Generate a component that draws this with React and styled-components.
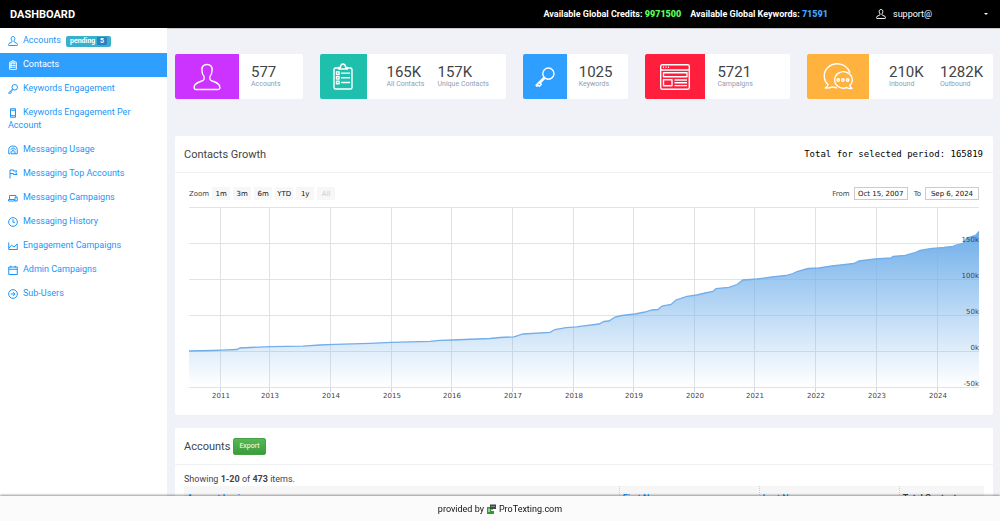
import React from 'react';
import styled, { createGlobalStyle } from 'styled-components';

const menu = [
  { label: 'Accounts', icon: 'user', pending: 5 },
  { label: 'Contacts', icon: 'note', active: true },
  { label: 'Keywords Engagement', icon: 'key' },
  { label: 'Keywords Engagement Per Account', icon: 'phone' },
  { label: 'Messaging Usage', icon: 'home' },
  { label: 'Messaging Top Accounts', icon: 'flag' },
  { label: 'Messaging Campaigns', icon: 'laptop' },
  { label: 'Messaging History', icon: 'clock' },
  { label: 'Engagement Campaigns', icon: 'graph' },
  { label: 'Admin Campaigns', icon: 'date' },
  { label: 'Sub-Users', icon: 'right' },
];

const stats = [
  { icon: 'user', color: '#cc33ff', cols: 6, w: 28, h: 28, values: [['577', 'Accounts']] },
  {
    icon: 'note',
    color: '#1fbfae',
    cols: 3,
    w: 20,
    h: 27,
    values: [['165K', 'All Contacts'], ['157K', 'Unique Contacts']],
  },
  { icon: 'key', color: '#2e9fff', cols: 5, w: 20, h: 20, values: [['1025', 'Keywords']] },
  { icon: 'browser', color: '#ff1f3d', cols: 5, w: 30, h: 26, values: [['5721', 'Campaigns']] },
  {
    icon: 'chat',
    color: '#ffb23e',
    cols: 4,
    w: 30,
    h: 27,
    values: [['210K', 'Inbound'], ['1282K', 'Outbound']],
  },
];

const ranges = ['1m', '3m', '6m', 'YTD', '1y', 'All'];

const years = [
  [32, '2011'],
  [81, '2013'],
  [142, '2014'],
  [203, '2015'],
  [263, '2016'],
  [324, '2017'],
  [385, '2018'],
  [445, '2019'],
  [506, '2020'],
  [566, '2021'],
  [627, '2022'],
  [688, '2023'],
  [749, '2024'],
];

const levels = [
  [37, '150k'],
  [73, '100k'],
  [109, '50k'],
  [145, '0k'],
  [181, '-50k'],
];

const growth =
  'M0 145 L23 144.5 33 144.2 48 143.5 51 142 61 141.5 81 140.7 114 140.2 131 139 146 138.3 181 137.3 202 136.3 241 135.3 251 134.3 263 134 301 132.5 311 131.5 325 130.8 334 128 361 126.3 366 123.5 377 121.7 388 120.8 391 120.3 410 118 415 115.5 420 115 426 111 433 109.5 446 108 456 106 463 104 469 103.5 473 100 482 98.5 487 94 498 90.3 508 89 516 87 524 85.5 527 82.7 540 81.3 548 78.5 554 74 568 73 583 71 597 69.5 604 67.5 608 65.5 619 62.5 630 62 643 60 665 57.5 670 55 686 53 702 52 704 50.5 716 49.3 725 47 731 44.5 741 42.7 755 41.5 764 40.3 767 39 774 37.5 778 32 784 30 787 29 790 25.5';

const shapes = {
  user: {
    box: '0 0 28 28',
    draw: (
      <path d="M14 1.5C10.4 1.5 8.7 3.7 8.9 7.2C9 9.9 9.8 12 11 13.4C11.5 15.1 11.4 16.4 10.3 17.2C8 18.8 2.6 19.2 1.4 23C.9 25 1 26.5 3 26.5H25C27 26.5 27.1 25 26.6 23C25.4 19.2 20 18.8 17.7 17.2C16.6 16.4 16.5 15.1 17 13.4C18.2 12 19 9.9 19.1 7.2C19.3 3.7 17.6 1.5 14 1.5Z" />
    ),
  },
  note: {
    box: '0 0 20 27',
    draw: (
      <>
        <path d="M5 5H2.5Q1 5 1 6.5V24.5Q1 26 2.5 26H17.5Q19 26 19 24.5V6.5Q19 5 17.5 5H15" />
        <path d="M5.5 6V4.5H7.3C7.6 2.3 8.5 1 10 1S12.4 2.3 12.7 4.5H14.5V6Z" />
        <path d="M3.5 8.8h2.6v2.6h-2.6zM3.5 13.5h2.6v2.6h-2.6zM3.5 18.2h2.6v2.6h-2.6zM8 10.1h9M8 14.8h9M8 19.5h9" />
      </>
    ),
  },
  key: {
    box: '0 0 20 20',
    draw: (
      <>
        <circle cx="13.4" cy="6.6" r="5.6" />
        <path d="M9 10.2L1 18.2L2 19.2L3.2 18L4.4 19.2L6.4 17.2L5.2 16L10 11.2M3.8 15.4L5 16.6" />
      </>
    ),
  },
  browser: {
    box: '0 0 30 26',
    draw: (
      <>
        <rect x=".7" y=".7" width="28.6" height="24.6" rx="1.5" />
        <path d="M.7 6H29.3M3 3.3h1M5.5 3.3h1M8 3.3h1" />
        <path d="M3.5 8.7h23.5v4h-23.5zM3.5 15.7h8.5v6h-8.5zM14.5 16h12.5M14.5 18.8h12.5M14.5 21.6h12.5" />
      </>
    ),
  },
  chat: {
    box: '0 0 30 27',
    draw: (
      <>
        <path d="M27 9.7C25.2 4.4 20.2.8 14.4.8C7.2.8 1.2 6.2 1.2 13C1.2 16.6 2.7 19.5 5 21.6C4.5 23.3 3.5 24.2 2.2 25C5 25.3 7.4 24.8 9.3 23.9C11 24.5 12.5 24.7 14 24.7" />
        <path d="M26.8 22.6A8.8 8.2 0 1 0 23.8 24.5C25.3 25.5 27.2 25.9 29 25.4C27.8 24.7 27.1 23.8 26.8 22.6Z" />
        <circle cx="15.2" cy="17" r="1.2" />
        <circle cx="19.9" cy="17" r="1.2" />
        <circle cx="24.6" cy="17" r="1.2" />
      </>
    ),
  },
  phone: {
    box: '0 0 20 20',
    draw: <path d="M5 1.5h10v17h-10zM5 4.5h10M5 15.5h10" />,
  },
  home: {
    box: '0 0 20 20',
    draw: (
      <path d="M4 17.5H1.5V9C1.5 4.5 5 2 10 2S18.5 4.5 18.5 9V17.5H6V13.5L10 9.5L14 13.5V17.5M5 9.5L10 5.5L15.5 9.5M9 13.5h2" />
    ),
  },
  flag: {
    box: '0 0 20 20',
    draw: <path d="M4 19V2H11V4H18L15.5 7.5L18 11H11V9H4" />,
  },
  laptop: {
    box: '0 0 20 20',
    draw: <path d="M3 13V5H16V8M1 16H13V13H1ZM14 8.5h4.5v7.5h-4.5z" />,
  },
  clock: {
    box: '0 0 20 20',
    draw: (
      <>
        <circle cx="10" cy="10" r="8.7" />
        <path d="M10 4.5V10.5H14" />
      </>
    ),
  },
  graph: {
    box: '0 0 20 20',
    draw: <path d="M1.5 3V17H19M2 14L7 8.5L12 12L18.5 6V17" />,
  },
  date: {
    box: '0 0 20 20',
    draw: <path d="M1.5 4h17v15h-17zM1.5 8.5h17M5.5 1.5v4M14.5 1.5v4" />,
  },
  right: {
    box: '0 0 20 20',
    draw: (
      <>
        <circle cx="10" cy="10" r="8.7" />
        <path d="M5.5 10H14M10.5 6.5L14 10L10.5 13.5" />
      </>
    ),
  },
};

function Icon({ name, width, height, line = 1 }) {
  return (
    <Drawing viewBox={shapes[name].box} width={width} height={height} strokeWidth={line} aria-hidden="true">
      {shapes[name].draw}
    </Drawing>
  );
}

function GrowthChart() {
  return (
    <Chart viewBox="0 0 790 196" role="img" aria-label="Contacts Growth">
      <defs>
        <linearGradient id="growthFill" x1="0" y1="0" x2="0" y2="1">
          <stop offset="0" stopColor="#6eaeea" />
          <stop offset="1" stopColor="#7cb5ec" stopOpacity="0" />
        </linearGradient>
      </defs>
      <g stroke="#e2e2e2" shapeRendering="crispEdges">
        <path d="M0 1.5H790" />
        {levels.map(([y]) => (
          <path key={y} d={`M0 ${y + 0.5}H790`} />
        ))}
        {years.map(([x]) => (
          <path key={x} d={`M${x - 0.5} 1V181`} />
        ))}
      </g>
      <path d={`${growth} V181 H0 Z`} fill="url(#growthFill)" />
      <path d={growth} fill="none" stroke="#72aeea" strokeWidth="1.3" />
      <g stroke="#c6d5e6" shapeRendering="crispEdges">
        <path d="M0 181.5H790" stroke="#dbe4f0" />
        {years.map(([x]) => (
          <path key={x} d={`M${x - 0.5} 182V186`} />
        ))}
      </g>
      {years.map(([x, year]) => (
        <text key={year} x={x} y="192" textAnchor="middle">
          {year}
        </text>
      ))}
      {levels.map(([y, label]) => (
        <text key={label} x="790" y={y - 1} textAnchor="end">
          {label}
        </text>
      ))}
    </Chart>
  );
}

export default function App() {
  return (
    <>
      <GlobalStyle />
      <TopBar>
        <Brand>DASHBOARD</Brand>
        <Credit $color="#5cff5c">
          Available Global Credits: <b>9971500</b>
        </Credit>
        <Credit $color="#3ea6ff">
          Available Global Keywords: <b>71591</b>
        </Credit>
        <UserMenu type="button">
          <Icon name="user" width={10} height={10} />
          support@
          <Caret />
        </UserMenu>
      </TopBar>

      <Layout>
        <Sidebar>
          {menu.map((item) => (
            <MenuLink key={item.label} href="#" $active={item.active}>
              <Icon name={item.icon} width={10} height={10} />
              {item.label}
              {item.pending && (
                <Pending>
                  pending <Count>{item.pending}</Count>
                </Pending>
              )}
            </MenuLink>
          ))}
        </Sidebar>

        <Content>
          <Stats>
            {stats.map((stat) => (
              <StatCard key={stat.icon}>
                <StatIcon $color={stat.color} $cols={stat.cols}>
                  <Icon name={stat.icon} width={stat.w} height={stat.h} line={1.4} />
                </StatIcon>
                <StatValues $wide={stat.values.length > 1}>
                  {stat.values.map(([value, label]) => (
                    <Stat key={label}>
                      <StatNumber>{value}</StatNumber>
                      <StatLabel>{label}</StatLabel>
                    </Stat>
                  ))}
                </StatValues>
              </StatCard>
            ))}
          </Stats>

          <Panel>
            <PanelHeader>
              <PanelTitle>Contacts Growth</PanelTitle>
              <Total>Total for selected period: 165819</Total>
            </PanelHeader>
            <ChartBody>
              <ChartTools>
                <span>Zoom</span>
                {ranges.map((range) => (
                  <RangeButton key={range} type="button" disabled={range === 'All'}>
                    {range}
                  </RangeButton>
                ))}
                <DateField>
                  From
                  <DateInput defaultValue="Oct 15, 2007" />
                </DateField>
                <DateField>
                  To
                  <DateInput defaultValue="Sep 6, 2024" />
                </DateField>
              </ChartTools>
              <GrowthChart />
            </ChartBody>
          </Panel>

          <Panel>
            <PanelHeader $compact>
              <PanelTitle>Accounts</PanelTitle>
              <ExportButton type="button">Export</ExportButton>
            </PanelHeader>
            <TableBody>
              <Summary>
                Showing <b>1-20</b> of <b>473</b> items.
              </Summary>
              <Table>
                <thead>
                  <tr>
                    <Th $width="54.4%">
                      <a href="#">Account Login</a>
                    </Th>
                    <Th $width="17.5%">
                      <a href="#">First Name</a>
                    </Th>
                    <Th $width="17.5%">
                      <a href="#">Last Name</a>
                    </Th>
                    <Th>Total Contacts</Th>
                  </tr>
                </thead>
              </Table>
            </TableBody>
          </Panel>
        </Content>
      </Layout>

      <Footer>
        provided by
        <svg width="9" height="10" viewBox="0 0 9 10" aria-hidden="true">
          <path d="M0 3H4V7H7V10H0Z" fill="#2f9a35" />
          <path d="M1 4.5H3V8H1Z" fill="#8ed48f" />
          <path d="M3 .5H9V5H6L4.5 6.5V5H3Z" fill="#3d4a40" />
          <path d="M4.5 2H5.5V3H4.5ZM6.5 2H7.5V3H6.5Z" fill="#c9d2ca" />
        </svg>
        ProTexting.com
      </Footer>
    </>
  );
}

const GlobalStyle = createGlobalStyle`
  * {
    box-sizing: border-box;
  }
  body {
    margin: 0;
    background: #f1f2f7;
    color: #3f4448;
    font-family: Roboto, sans-serif;
    font-size: 9px;
  }
  #root {
    display: flex;
    flex-direction: column;
    min-height: 100vh;
  }
  button, input {
    font-family: inherit;
  }
  a {
    color: #1b95fa;
    text-decoration: none;
  }
`;

const Drawing = styled.svg`
  flex: none;
  fill: none;
  stroke: currentColor;
  stroke-linejoin: round;

  * {
    vector-effect: non-scaling-stroke;
  }
`;

const TopBar = styled.header`
  display: flex;
  align-items: center;
  height: 28px;
  padding: 0 7px 0 10px;
  background: #000;
  box-shadow: 0 1px 0 #c9c9cb;
  color: #fff;
`;

const Brand = styled.h1`
  flex: 1;
  margin: 0;
  font-size: 11px;
  font-weight: 700;
`;

const Credit = styled.span`
  margin-right: 9px;
  font-weight: 700;

  b {
    color: ${(props) => props.$color};
  }
`;

const UserMenu = styled.button`
  display: flex;
  align-items: center;
  gap: 7px;
  width: 117px;
  margin-left: 39px;
  padding: 0;
  border: 0;
  background: none;
  color: #fff;
  font-size: 9px;
`;

const Caret = styled.span`
  margin-right: 5px;
  margin-left: auto;
  border: 2px solid transparent;
  border-top-color: #fff;
  border-bottom: 0;
`;

const Layout = styled.div`
  display: flex;
  flex: 1;
`;

const Sidebar = styled.nav`
  flex: none;
  width: 167px;
  padding-top: 1px;
  background: #fff;
`;

const MenuLink = styled.a`
  display: block;
  padding: 5px 8px 6px;
  background: ${(props) => (props.$active ? '#2e9fff' : 'none')};
  color: ${(props) => (props.$active ? '#fff' : '#1b95fa')};
  line-height: 13px;

  ${Drawing} {
    margin-right: 5px;
    vertical-align: -3px;
  }
`;

const Pending = styled.span`
  display: inline-block;
  margin-left: 5px;
  padding: 0 4px;
  border-radius: 2px;
  background: #3aafcd;
  color: #fff;
  font-size: 7px;
  font-weight: 700;
  line-height: 11px;
`;

const Count = styled.span`
  display: inline-block;
  padding: 0 3px;
  border-radius: 1px;
  background: #2f7fc0;
  line-height: 8px;
`;

const Content = styled.main`
  flex: 1;
  min-width: 0;
  padding: 26px 7px 0 8px;
`;

const Stats = styled.section`
  display: grid;
  grid-template-columns: 128fr 186fr 105fr 145fr 186fr;
  gap: 17px;
  margin-bottom: 37px;
`;

const StatCard = styled.div`
  display: flex;
  height: 45px;
  border-radius: 2px;
  background: #fff;
  overflow: hidden;
`;

const StatIcon = styled.div`
  display: flex;
  flex: none;
  align-items: center;
  justify-content: center;
  width: calc(100% * ${(props) => props.$cols} / 12);
  background: ${(props) => props.$color};
  color: #fff;
`;

const StatValues = styled.div`
  display: flex;
  align-items: center;
  gap: 12px;
  padding-left: ${(props) => (props.$wide ? '20px' : '12px')};
`;

const Stat = styled.div`
  min-width: 39px;
  white-space: nowrap;
`;

const StatNumber = styled.div`
  font-size: 15px;
  line-height: 16px;
`;

const StatLabel = styled.div`
  color: #8f9eb0;
  font-size: 7px;
  line-height: 9px;
`;

const Panel = styled.section`
  margin-bottom: 13px;
  border-radius: 2px;
  background: #fff;
`;

const PanelHeader = styled.header`
  display: flex;
  align-items: center;
  justify-content: ${(props) => (props.$compact ? 'flex-start' : 'space-between')};
  gap: 3px;
  height: 37px;
  padding: 0 10px 0 9px;
  border-bottom: 1px solid #f1f2f4;
`;

const PanelTitle = styled.h2`
  margin: 0;
  font-size: 11px;
  font-weight: 400;
`;

const Total = styled.span`
  color: #000;
  font-family: 'DejaVu Sans Mono', monospace;
`;

const ChartBody = styled.div`
  padding: 14px 14px 13px;
`;

const ChartTools = styled.div`
  display: flex;
  align-items: center;
  gap: 3px;
  height: 13px;
  margin-bottom: 6px;
  color: #444;
  font-family: 'DejaVu Sans', sans-serif;
  font-size: 7px;
`;

const RangeButton = styled.button`
  width: 18px;
  height: 13px;
  padding: 0;
  border: 0;
  background: #f7f7f7;
  color: #111;
  font-size: 7px;

  &:disabled {
    color: #ccc;
  }
`;

const DateField = styled.label`
  display: flex;
  align-items: center;
  gap: 4px;
  margin-left: 3px;

  button + & {
    margin-left: auto;
  }
`;

const DateInput = styled.input`
  width: 54px;
  height: 13px;
  padding: 0;
  border: 1px solid #ccc;
  color: #111;
  font-size: 7px;
  text-align: center;
`;

const Chart = styled.svg`
  display: block;
  width: 100%;
  overflow: visible;

  text {
    fill: #444;
    font-family: 'DejaVu Sans', sans-serif;
    font-size: 7px;
  }
`;

const ExportButton = styled.button`
  height: 17px;
  padding: 0 5px;
  border: 1px solid #46a046;
  border-radius: 2px;
  background: linear-gradient(#55b855, #3c9c3c);
  color: #fff;
  font-size: 7px;
`;

const TableBody = styled.div`
  padding: 8px 9px 0;
`;

const Summary = styled.p`
  margin: 0;
  line-height: 13px;
`;

const Table = styled.table`
  width: 100%;
  border-collapse: collapse;
  table-layout: fixed;
`;

const Th = styled.th`
  width: ${(props) => props.$width || 'auto'};
  padding: 7px 3px 3px;
  background: #f6f6f6;
  font-weight: 500;
  line-height: 11px;
  text-align: left;

  & + & {
    border-left: 1px dotted #d0d0d0;
  }
`;

const Footer = styled.footer`
  position: fixed;
  right: 0;
  bottom: 0;
  left: 0;
  display: flex;
  align-items: center;
  justify-content: center;
  gap: 3px;
  height: 25px;
  background: #fbfbfb;
  box-shadow: 0 -1px 2px rgba(0, 0, 0, 0.4);
  color: #111;
`;
